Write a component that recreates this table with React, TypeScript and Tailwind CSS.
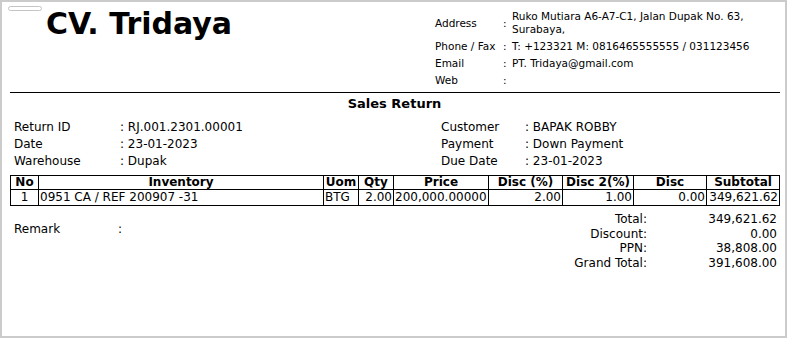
import React from "react";

const company = [
  { label: "Address", value: <>Ruko Mutiara A6-A7-C1, Jalan Dupak No. 63,<br />Surabaya,</> },
  { label: "Phone / Fax", value: "T: +123321 M: 0816465555555 / 031123456" },
  { label: "Email", value: "PT. Tridaya@gmail.com" },
  { label: "Web", value: "" },
];

const leftInfo = [
  ["Return ID", "RJ.001.2301.00001"],
  ["Date", "23-01-2023"],
  ["Warehouse", "Dupak"],
];

const rightInfo = [
  ["Customer", "BAPAK ROBBY"],
  ["Payment", "Down Payment"],
  ["Due Date", "23-01-2023"],
];

const totals = [
  ["Total:", "349,621.62"],
  ["Discount:", "0.00"],
  ["PPN:", "38,808.00"],
  ["Grand Total:", "391,608.00"],
];

const cols = [
  { name: "No", w: "w-[28px]" },
  { name: "Inventory", w: "w-[285px]" },
  { name: "Uom", w: "w-[35px]" },
  { name: "Qty", w: "w-[35px]" },
  { name: "Price", w: "w-[95px]" },
  { name: "Disc (%)", w: "w-[74px]" },
  { name: "Disc 2(%)", w: "w-[71px]" },
  { name: "Disc", w: "w-[73px]" },
  { name: "Subtotal", w: "w-[73px]" },
];

export default function App() {
  return (
    <div className="w-[787px] h-[338px] border-2 border-[#cbcbcb] bg-white text-black font-['DejaVu_Sans',sans-serif] pl-[8px] pr-[6px] overflow-hidden">
      {/* Header */}
      <div className="flex">
        <div className="flex flex-1 items-start">
          <div className="ml-[-2px] mt-[4px] w-[34px] h-[5px] rounded-sm border border-[#c4c4c4]" />
          <h1 className="ml-[4px] mt-[7px] text-[30px] leading-[30px] font-bold">CV. Tridaya</h1>
        </div>
        <table className="w-[344px] mt-[6px] text-[10.5px] leading-[13px] border-collapse">
          <tbody>
            {company.map((c) => (
              <tr key={c.label}>
                <td className="w-[68px] py-[2px] align-middle">{c.label}</td>
                <td className="w-[9px] py-[2px] align-middle">:</td>
                <td className="py-[2px] align-middle">{c.value}</td>
              </tr>
            ))}
          </tbody>
        </table>
      </div>

      <div className="mt-[3px] mr-[-1px] border-t border-black" />

      <div className="text-center font-bold text-[13px] leading-[15px] mt-[3px]">Sales Return</div>

      {/* Info */}
      <div className="flex text-[12px] leading-[17px] mt-[8px]">
        <div className="w-[431px] pl-[4px]">
          {leftInfo.map(([l, v]) => (
            <div key={l} className="flex">
              <span className="w-[106px]">{l}</span>
              <span>: {v}</span>
            </div>
          ))}
        </div>
        <div>
          {rightInfo.map(([l, v]) => (
            <div key={l} className="flex">
              <span className="w-[84px]">{l}</span>
              <span>: {v}</span>
            </div>
          ))}
        </div>
      </div>

      {/* Items */}
      <table className="mt-[5px] w-[770px] table-fixed border-collapse text-[12px]">
        <thead>
          <tr className="leading-[13px]">
            {cols.map((c) => (
              <th key={c.name} className={`${c.w} border border-black font-bold text-center px-[1px]`}>
                {c.name}
              </th>
            ))}
          </tr>
        </thead>
        <tbody>
          <tr className="leading-[15px]">
            <td className="border border-black text-center">1</td>
            <td className="border border-black px-[1px]">0951 CA / REF 200907 -31</td>
            <td className="border border-black px-[1px]">BTG</td>
            <td className="border border-black text-right px-[1px]">2.00</td>
            <td className="border border-black px-[1px]">200,000.00000</td>
            <td className="border border-black text-right px-[1px]">2.00</td>
            <td className="border border-black text-right px-[1px]">1.00</td>
            <td className="border border-black text-right px-[1px]">0.00</td>
            <td className="border border-black text-right px-[1px]">349,621.62</td>
          </tr>
        </tbody>
      </table>

      {/* Footer */}
      <div className="flex justify-between text-[12px] mt-[5px]">
        <div className="flex pl-[4px] mt-[10px] leading-[16px]">
          <span className="w-[104px]">Remark</span>
          <span>:</span>
        </div>
        <div className="grid grid-cols-[auto_130px] leading-[14.7px] pr-[2px] mt-[1px]">
          {totals.map(([l, v]) => (
            <React.Fragment key={l}>
              <span className="text-right">{l}</span>
              <span className="text-right">{v}</span>
            </React.Fragment>
          ))}
        </div>
      </div>
    </div>
  );
}
